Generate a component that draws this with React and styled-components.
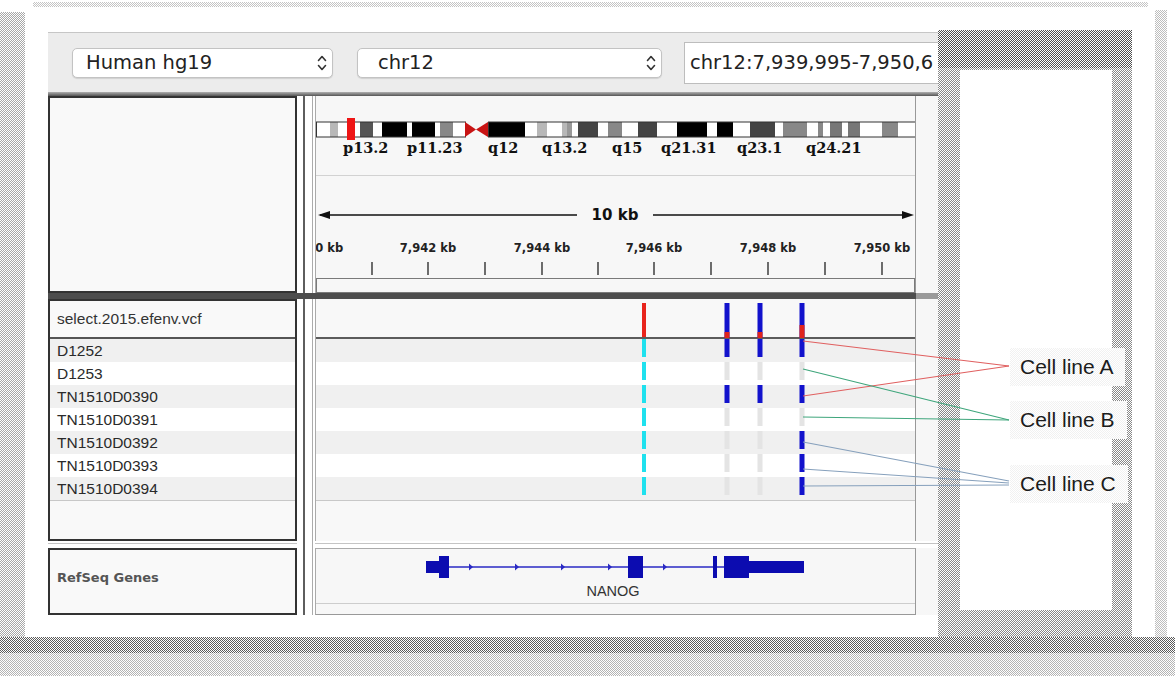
import React from 'react'
import styled, { createGlobalStyle } from 'styled-components'

const GlobalStyle = createGlobalStyle`
  html, body {
    margin: 0;
    padding: 0;
    background: #fff;
  }
  body {
    font-family: 'Liberation Sans', Arial, sans-serif;
  }
`

// dithered print-style patterns used for the frame round the screenshot
const checker = (c) => `
  background-color: #fff;
  background-image: repeating-conic-gradient(${c} 0% 25%, transparent 0% 50%);
  background-size: 2px 2px;
`

const Page = styled.div`
  position: relative;
  width: 1175px;
  height: 676px;
  overflow: hidden;
  display: grid;
  grid-template-columns: 25px 23px 890px 194px 23px 12px 8px;
  grid-template-rows: 30px 607px 39px;
  background: #fff;
`

const TopDots = styled.div`
  grid-column: 1 / -1;
  grid-row: 1;
  margin: 2px 27px 0 33px;
  height: 5px;
  ${checker('#c4c4c4')}
`

const LeftStrip = styled.div`
  grid-column: 1;
  grid-row: 1 / 3;
  margin-top: 12px;
  ${checker('#a8a8a8')}
`

const RightDots = styled.div`
  grid-column: 6;
  grid-row: 1 / 3;
  margin-top: 10px;
  ${checker('#bdbdbd')}
`

const BottomBand = styled.div`
  grid-column: 1 / -1;
  grid-row: 3;
  display: flex;
  flex-direction: column;
`

const BandHeavy = styled.div`
  height: 16px;
  ${checker('#5a5a5a')}
`

const BandLight = styled.div`
  flex: 1;
  ${checker('#b4b4b4')}
`

const SideBlock = styled.div`
  grid-column: 4;
  grid-row: 2;
  display: grid;
  ${checker('#888')}
`

const SideTop = styled.div`
  grid-area: 1 / 1;
  align-self: start;
  height: 38px;
  ${checker('#505050')}
`

const SideInner = styled.div`
  grid-area: 1 / 1;
  margin: 40px 20px 27px 22px;
  background: #fff;
`

const Legend = styled.div`
  grid-area: 1 / 1;
  display: flex;
  flex-direction: column;
  align-items: flex-start;
  padding: 318px 0 0 72px;
`

const LegendItem = styled.div`
  margin-top: ${(p) => p.$mt || 0}px;
  padding: 6px 12px 6px 10px;
  font-family: 'Liberation Sans', Arial, sans-serif;
  font-size: 21px;
  line-height: 26px;
  color: #1c1c1c;
  white-space: nowrap;
  ${checker('#f1f1f1')}
`

const Window = styled.div`
  grid-column: 3;
  grid-row: 2;
  align-self: start;
  margin-top: 2px;
  display: flex;
  flex-direction: column;
  background: #fff;
  overflow: hidden;
`

const Toolbar = styled.div`
  height: 60px;
  box-sizing: border-box;
  border-top: 1px solid #c6c6c6;
  background: #ececec;
  display: flex;
  align-items: center;
  padding-left: 24px;
  overflow: hidden;
`

const Dropdown = styled.div`
  flex: none;
  width: ${(p) => p.$w}px;
  height: 30px;
  margin-left: ${(p) => p.$ml || 0}px;
  box-sizing: border-box;
  border: 1px solid #c3c3c3;
  border-radius: 5px;
  background: #fff;
  box-shadow: 0 1px 1px rgba(0, 0, 0, 0.12);
  display: flex;
  align-items: center;
  justify-content: space-between;
  padding: 0 5px 0 ${(p) => p.$pl}px;
  font-family: 'DejaVu Sans', sans-serif;
  font-size: 19.5px;
  color: #222;
`

const Locus = styled.div`
  flex: 1;
  min-width: 0;
  height: 42px;
  margin-left: 22px;
  box-sizing: border-box;
  border: 1px solid #bdbdbd;
  border-right: none;
  background: #fff;
  display: flex;
  align-items: center;
  padding-left: 5px;
  overflow: hidden;
  white-space: nowrap;
  font-family: 'DejaVu Sans', sans-serif;
  font-size: 19.5px;
  color: #222;
`

const Separator = styled.div`
  height: 4px;
  flex: none;
  background: linear-gradient(#b0b0b0, #555);
`

const DarkBar = styled.div`
  height: 6px;
  flex: none;
  background: linear-gradient(to right, #4d4d4d 868px, #9a9a9a 868px);
`

const Row = styled.div`
  display: flex;
  flex: none;
  height: ${(p) => p.$h}px;
`

const GapRow = styled.div`
  display: flex;
  flex: none;
  height: 7px;
  padding-left: 249px;
  background: linear-gradient(#fff 0 2px, #c4c4c4 2px 3px, #fff 3px);
`

const NamePanel = styled.div`
  width: 249px;
  flex: none;
  box-sizing: border-box;
  border: 2px solid #333;
  background: #f9f9f9;
  display: flex;
  flex-direction: column;
`

const Divider = styled.div`
  width: 18px;
  flex: none;
  box-sizing: border-box;
  padding-left: 6px;
  display: flex;
  background: #fff;
`

const Rail = styled.div`
  width: 10px;
  box-sizing: border-box;
  border-left: 2px solid #5e5e5e;
  border-right: 1px solid #ababab;
`

const DataPanel = styled.div`
  width: 601px;
  flex: none;
  box-sizing: border-box;
  border-left: 1px solid #aaa;
  border-right: 1px solid #999;
  border-top: ${(p) => (p.$boxed ? '1px solid #aaa' : 'none')};
  border-bottom: ${(p) => (p.$boxed ? '1px solid #999' : 'none')};
  background: #f7f7f7;
  overflow: hidden;
  svg {
    display: block;
  }
`

const RightStrip = styled.div`
  flex: 1;
  background: #f7f7f7;
`

const TrackHeader = styled.div`
  height: 36px;
  flex: none;
  border-bottom: 2px solid #555;
  display: flex;
  align-items: center;
  padding-left: 7px;
  font-size: 15.5px;
  color: #333;
`

const SampleRow = styled.div`
  height: 23px;
  flex: none;
  display: flex;
  align-items: center;
  padding-left: 7px;
  font-size: 15.5px;
  color: #2a2a2a;
  background: ${(p) => (p.$shade ? '#f0f0f0' : '#fff')};
`

const RowsEnd = styled.div`
  height: 1px;
  flex: none;
  background: #c8c8c8;
`

const GeneName = styled.div`
  flex: 1;
  display: flex;
  align-items: center;
  padding: 0 0 8px 7px;
  font-family: 'DejaVu Sans', sans-serif;
  font-weight: bold;
  font-size: 13px;
  color: #555;
`

const Overlay = styled.svg`
  position: absolute;
  left: 0;
  top: 0;
  pointer-events: none;
`

const X0 = 316

const BANDS = [
  [330, 338, '#b8b8b8'],
  [360, 373, '#555'],
  [382, 407, '#000'],
  [412, 435, '#000'],
  [440, 453, '#888'],
  [488, 525, '#000'],
  [537, 547, '#b8b8b8'],
  [562, 567, '#b8b8b8'],
  [567, 572, '#999'],
  [578, 598, '#444'],
  [608, 622, '#888'],
  [638, 657, '#444'],
  [677, 707, '#000'],
  [717, 733, '#000'],
  [750, 775, '#444'],
  [783, 807, '#888'],
  [818, 823, '#888'],
  [830, 842, '#777'],
  [848, 860, '#777'],
  [882, 898, '#888'],
]

const BAND_LABELS = [
  ['p13.2', 343],
  ['p11.23', 407],
  ['q12', 488],
  ['q13.2', 542],
  ['q15', 612],
  ['q21.31', 661],
  ['q23.1', 737],
  ['q24.21', 806],
]

const TICKS = [372, 428, 485, 542, 598, 654, 711, 768, 825, 882]
const TICK_LABELS = [
  ['7,940 kb', 315],
  ['7,942 kb', 428],
  ['7,944 kb', 542],
  ['7,946 kb', 654],
  ['7,948 kb', 768],
  ['7,950 kb', 882],
]

const SAMPLES = ['D1252', 'D1253', 'TN1510D0390', 'TN1510D0391', 'TN1510D0392', 'TN1510D0393', 'TN1510D0394']

// genotype per sample for the variants at 727, 760 and 802 (1 = called)
const CALLS = [
  { x: 727, rows: [1, 0, 1, 0, 0, 0, 0], red: [33, 6] },
  { x: 760, rows: [1, 0, 1, 0, 0, 0, 0], red: [33, 6] },
  { x: 802, rows: [1, 0, 1, 0, 1, 1, 1], red: [26, 13] },
]

const Chevrons = () => (
  <svg width="10" height="18" viewBox="0 0 10 18">
    <path
      d="M1.5 6.5 L5 2.5 L8.5 6.5 M1.5 11.5 L5 15.5 L8.5 11.5"
      fill="none"
      stroke="#333"
      strokeWidth="1.6"
      strokeLinecap="round"
      strokeLinejoin="round"
    />
  </svg>
)

const HeaderChart = () => (
  <svg width="599" height="197">
    <rect x="0.5" y="26" width={465 - X0} height="15" fill="#fff" />
    <rect x={488 - X0} y="26" width={915 - 488} height="15" fill="#fff" />
    {BANDS.map(([a, b, c]) => (
      <rect key={a} x={a - X0} y="26" width={b - a} height="15" fill={c} />
    ))}
    <rect x="0.5" y="26" width={465 - X0} height="15" fill="none" stroke="#333" />
    <rect x={488 - X0 + 0.5} y="26" width={915 - 488} height="15" fill="none" stroke="#333" />
    <polygon points="149,26 160,33.5 149,41" fill="#c81414" />
    <polygon points="172,26 160,33.5 172,41" fill="#c81414" />
    <rect x={347 - X0} y="22" width="8" height="22" fill="#ee1515" />
    {BAND_LABELS.map(([t, x]) => (
      <text key={t} x={x - X0} y="57" fontFamily="'DejaVu Serif', serif" fontWeight="bold" fontSize="14.5" fill="#111">
        {t}
      </text>
    ))}
    <line x1="0" x2="599" y1="79.5" y2="79.5" stroke="#d2d2d2" />
    <line x1="4" x2="261" y1="119" y2="119" stroke="#111" strokeWidth="1.5" />
    <line x1="337" x2="594" y1="119" y2="119" stroke="#111" strokeWidth="1.5" />
    <polygon points="2,119 14,115 14,123" fill="#111" />
    <polygon points="598,119 586,115 586,123" fill="#111" />
    <text x="299" y="119" textAnchor="middle" dominantBaseline="central" fontFamily="'DejaVu Sans', sans-serif" fontWeight="bold" fontSize="15" fill="#111">
      10 kb
    </text>
    {TICK_LABELS.map(([t, x]) => (
      <text key={t} x={x - X0} y="152" textAnchor="middle" dominantBaseline="central" fontFamily="'DejaVu Sans', sans-serif" fontWeight="bold" fontSize="11.5" fill="#222">
        {t}
      </text>
    ))}
    {TICKS.map((x) => (
      <line key={x} x1={x - X0} x2={x - X0} y1="166" y2="179" stroke="#222" strokeWidth="1.3" />
    ))}
    <rect x="0.5" y="182.5" width="598" height="14" fill="#f7f7f7" stroke="#7a7a7a" />
  </svg>
)

const VariantChart = () => (
  <svg width="599" height="242">
    <rect x="0" y="0" width="599" height="38" fill="#f8f8f8" />
    <rect x="0" y="38" width="599" height="2" fill="#5c5c5c" />
    {SAMPLES.map((s, i) => (
      <rect key={s} x="0" y={40 + 23 * i} width="599" height="23" fill={i % 2 === 0 ? '#f0f0f0' : '#fff'} />
    ))}
    <rect x="0" y="201" width="599" height="1" fill="#c8c8c8" />
    <rect x="0" y="202" width="599" height="40" fill="#f8f8f8" />

    <rect x={644 - X0 - 2} y="4" width="4" height="34" fill="#e8241c" />
    {SAMPLES.map((s, i) => (
      <rect key={s} x={644 - X0 - 2} y={40 + 23 * i} width="4" height="18" fill="#1fe1ee" />
    ))}

    {CALLS.map((v) => (
      <g key={v.x}>
        <rect x={v.x - X0 - 2.5} y="4" width="5" height="35" fill="#1212cc" />
        <rect x={v.x - X0 - 2.5} y={v.red[0]} width="5" height={v.red[1]} fill="#e0241c" />
        {v.rows.map((on, i) => (
          <rect key={i} x={v.x - X0 - 2.5} y={40 + 23 * i} width="5" height="18" fill={on ? '#1212cc' : '#e4e4e4'} />
        ))}
      </g>
    ))}
  </svg>
)

const ARROWS = [471, 517, 563, 610, 665]

const GeneChart = () => (
  <svg width="599" height="65">
    <line x1={439 - X0} x2={724 - X0} y1="18" y2="18" stroke="#2a2ac4" strokeWidth="1.4" />
    {ARROWS.map((x) => (
      <polygon key={x} points={`${x - X0 - 2},14.5 ${x - X0 + 2},18 ${x - X0 - 2},21.5`} fill="#2a2ac4" />
    ))}
    <g fill="#0c0cb0">
      <rect x={426 - X0} y="12" width="13" height="12" />
      <rect x={439 - X0} y="7" width="10" height="22" />
      <rect x={628 - X0} y="7" width="15" height="22" />
      <rect x={713 - X0} y="7" width="4" height="22" />
      <rect x={724 - X0} y="7" width="25" height="22" />
      <rect x={749 - X0} y="12" width="55" height="12" />
    </g>
    <text x="297" y="42" textAnchor="middle" dominantBaseline="central" fontFamily="'Liberation Sans', Arial, sans-serif" fontSize="14.5" fill="#333">
      NANOG
    </text>
    <line x1="0" x2="599" y1="54.5" y2="54.5" stroke="#cdcdcd" />
  </svg>
)

const LINKS = [
  ['#e06060', 803, 341, 1009, 366],
  ['#e06060', 803, 396, 1009, 366],
  ['#3fa67c', 803, 369, 1009, 420],
  ['#3fa67c', 803, 417, 1009, 420],
  ['#86a0bc', 803, 442, 1009, 481],
  ['#86a0bc', 803, 469, 1009, 483],
  ['#86a0bc', 803, 486, 1009, 485],
]

export default function App() {
  return (
    <>
      <GlobalStyle />
      <Page>
        <TopDots />
        <LeftStrip />
        <RightDots />

        <Window>
          <Toolbar>
            <Dropdown $w={261} $pl={13}>
              Human hg19
              <Chevrons />
            </Dropdown>
            <Dropdown $w={305} $pl={20} $ml={24}>
              chr12
              <Chevrons />
            </Dropdown>
            <Locus>chr12:7,939,995-7,950,6</Locus>
          </Toolbar>
          <Separator />

          <Row $h={197}>
            <NamePanel />
            <Divider>
              <Rail />
            </Divider>
            <DataPanel>
              <HeaderChart />
            </DataPanel>
            <RightStrip />
          </Row>
          <DarkBar />

          <Row $h={242}>
            <NamePanel>
              <TrackHeader>select.2015.efenv.vcf</TrackHeader>
              {SAMPLES.map((s, i) => (
                <SampleRow key={s} $shade={i % 2 === 0}>
                  {s}
                </SampleRow>
              ))}
              <RowsEnd />
            </NamePanel>
            <Divider>
              <Rail />
            </Divider>
            <DataPanel>
              <VariantChart />
            </DataPanel>
            <RightStrip />
          </Row>

          <GapRow>
            <Divider>
              <Rail />
            </Divider>
          </GapRow>

          <Row $h={67}>
            <NamePanel>
              <GeneName>RefSeq Genes</GeneName>
            </NamePanel>
            <Divider>
              <Rail />
            </Divider>
            <DataPanel $boxed>
              <GeneChart />
            </DataPanel>
            <RightStrip />
          </Row>
        </Window>

        <SideBlock>
          <SideTop />
          <SideInner />
          <Legend>
            <LegendItem>Cell line A</LegendItem>
            <LegendItem $mt={15}>Cell line B</LegendItem>
            <LegendItem $mt={26}>Cell line C</LegendItem>
          </Legend>
        </SideBlock>

        <BottomBand>
          <BandHeavy />
          <BandLight />
        </BottomBand>

        <Overlay width="1175" height="676">
          {LINKS.map(([c, x1, y1, x2, y2], i) => (
            <line key={i} x1={x1} y1={y1} x2={x2} y2={y2} stroke={c} strokeWidth="1.2" />
          ))}
        </Overlay>
      </Page>
    </>
  )
}
